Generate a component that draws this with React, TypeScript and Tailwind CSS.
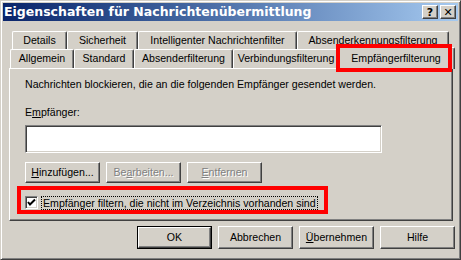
import type { ReactNode } from 'react'

const raised =
  'border border-t-white border-l-white border-r-[#404040] border-b-[#404040] shadow-[inset_-1px_-1px_0_#808080]'
const sunken =
  'border border-t-[#808080] border-l-[#808080] border-r-white border-b-white shadow-[inset_1px_1px_0_#404040,inset_-1px_-1px_0_#d4d0c8]'

const backRow = [
  { label: 'Details', w: 'w-[55px]' },
  { label: 'Sicherheit', w: 'w-[71px]' },
  { label: 'Intelligenter Nachrichtenfilter', w: 'w-[159px]' },
  { label: 'Absenderkennungsfilterung', w: 'w-[152px]' },
]

const frontRow = [
  { label: 'Allgemein', w: 'w-[64px]' },
  { label: 'Standard', w: 'w-[60px]' },
  { label: 'Absenderfilterung', w: 'w-[99px]' },
  { label: 'Verbindungsfilterung', w: 'w-[106px]' },
]

function Tab({ label, w }: { label: string; w: string }) {
  return (
    <div
      className={`${w} h-[19px] shrink-0 rounded-t-[2px] border-l border-t border-r border-l-white border-t-white border-r-[#404040] bg-[#d4d0c8] text-center leading-[17px] shadow-[inset_-1px_0_0_#808080]`}
    >
      {label}
    </div>
  )
}

function Button({ children, disabled, isDefault, w = 'w-[75px]', h = 'h-[21px]' }: { children: ReactNode; disabled?: boolean; isDefault?: boolean; w?: string; h?: string }) {
  return (
    <div className={`${w} ${h} shrink-0 ${isDefault ? 'border border-black' : ''}`}>
      <div
        className={`flex h-full w-full items-center justify-center ${raised} ${disabled ? 'text-[#808080] [text-shadow:1px_1px_0_#fff]' : 'text-black'}`}
      >
        {children}
      </div>
    </div>
  )
}

function TitleButton({ children }: { children: ReactNode }) {
  return (
    <div className={`flex h-[14px] w-[16px] items-center justify-center bg-[#d4d0c8] font-['DejaVu_Sans',sans-serif] text-[11px] font-bold leading-none text-black ${raised}`}>
      {children}
    </div>
  )
}

export default function App() {
  return (
    <div className="h-[260px] w-[461px] overflow-hidden bg-[#d4d0c8] font-['Liberation_Sans',Arial,sans-serif] text-[10.6px] text-black">
      <div className="flex h-full w-full flex-col border border-t-[#d4d0c8] border-l-[#d4d0c8] border-r-[#404040] border-b-[#404040] p-[2px] shadow-[inset_1px_1px_0_#fff,inset_-1px_-1px_0_#808080]">
        <div className="flex h-[18px] shrink-0 items-center justify-between bg-gradient-to-r from-[#0a246a] to-[#a6caf0] pl-[1px] pr-[2px]">
          <span className="font-['DejaVu_Sans',sans-serif] text-[12.5px] font-bold text-white">Eigenschaften für Nachrichtenübermittlung</span>
          <div className="flex gap-[2px]">
            <TitleButton>?</TitleButton>
            <TitleButton>✕</TitleButton>
          </div>
        </div>

        <div className="mt-[10px] flex flex-col">
          <div className="flex pl-[9px]">
            {backRow.map((t) => (
              <Tab key={t.label} {...t} />
            ))}
          </div>
          <div className="-mt-px flex pl-[7px]">
            {frontRow.map((t) => (
              <Tab key={t.label} {...t} />
            ))}
            <div className="relative z-10 -mt-[2px] -mb-px ml-[-2px] h-[22px] w-[118px] shrink-0 rounded-t-[2px] border-l border-t border-r border-l-white border-t-white border-r-[#404040] bg-[#d4d0c8] pt-[3px] text-center leading-[14px] shadow-[inset_-1px_0_0_#808080]">
              Empfängerfilterung
              <div className="absolute -top-[4px] -left-[2px] h-[28px] w-[116px] border-4 border-[#ff0000]" />
            </div>
          </div>
        </div>

        <div className="ml-[6px] flex h-[153px] w-[444px] flex-col border border-t-white border-l-white border-r-[#404040] border-b-[#404040] pl-[15px] shadow-[inset_-1px_-1px_0_#808080]">
          <div className="mt-[9px] h-[13px] leading-[13px]">
            Nachrichten blockieren, die an die folgenden Empfänger gesendet werden.
          </div>
          <div className="mt-[15px] h-[13px] leading-[13px]">
            E<u>m</u>pfänger:
          </div>
          <div className={`mt-[6px] h-[28px] w-[357px] bg-white ${sunken}`} />
          <div className="mt-[9px] flex gap-[6px]">
            <Button>
              <span><u>H</u>inzufügen...</span>
            </Button>
            <Button disabled>
              <span>Be<u>a</u>rbeiten...</span>
            </Button>
            <Button disabled>
              <span><u>E</u>ntfernen</span>
            </Button>
          </div>
          <div className="relative mt-[13px] flex h-[13px] items-center">
            <div className={`flex h-[13px] w-[13px] items-center justify-center bg-white ${sunken}`}>
              <svg width="9" height="9" viewBox="0 0 9 9">
                <path d="M1 4 L3 6.5 L8 1.5" fill="none" stroke="#000" strokeWidth="2" />
              </svg>
            </div>
            <div className="ml-[3px] h-[14px] border border-dotted border-black px-[1px] leading-[12px]">
              Empfänger filtern, die nicht im Verzeichnis vorhanden sind
            </div>
            <div className="absolute -top-[10px] -left-[8px] h-[28px] w-[311px] border-4 border-[#ff0000]" />
          </div>
        </div>

        <div className="mt-[5px] flex justify-end gap-[6px] pr-[3px]">
          <Button isDefault h="h-[23px]">OK</Button>
          <Button h="h-[23px]">Abbrechen</Button>
          <Button h="h-[23px]">
            <span><u>Ü</u>bernehmen</span>
          </Button>
          <Button h="h-[23px]">Hilfe</Button>
        </div>
      </div>
    </div>
  )
}
